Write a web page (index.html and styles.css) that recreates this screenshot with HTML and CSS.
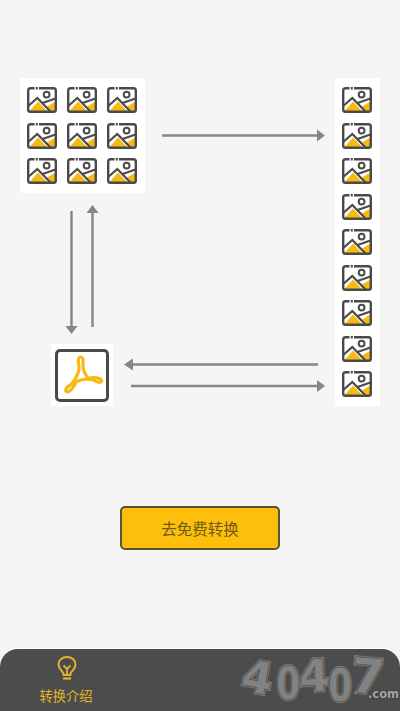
FILE: index.html
```html
<!DOCTYPE html>
<html lang="zh">
<head>
<meta charset="utf-8">
<title>转换介绍</title>
<link rel="stylesheet" href="styles.css">
</head>
<body>
<svg class="defs" width="0" height="0" aria-hidden="true">
  <symbol id="pic" viewBox="0 0 30 26">
    <path d="M2 24.500 L11 14.500 L20.500 24.500 Z M20 19.500 L28.500 14.500 V24.500 H25 Z" fill="#f5bb14"/>
    <path d="M7.500 1.200 H3.500 Q1.200 1.200 1.200 3.500 V22.500 Q1.200 24.800 3.500 24.800 H26.500 Q28.800 24.800 28.800 22.500 V3.500 Q28.800 1.200 26.500 1.200 H12 M8.800 1.200 H10.800" fill="none" stroke="#4a4a4a" stroke-width="2.400"/>
    <path d="M1.500 18.800 L10.300 11 L24 25" fill="none" stroke="#4a4a4a" stroke-width="2.200"/>
    <path d="M15.500 16 L28.500 11.500" fill="none" stroke="#4a4a4a" stroke-width="2.200"/>
    <circle cx="19.600" cy="7.600" r="2.900" fill="none" stroke="#4a4a4a" stroke-width="2"/>
  </symbol>
</svg>

<main class="screen">
  <section class="diagram">
    <div class="panel panel-grid">
      <svg class="pic"><use href="#pic"/></svg><svg class="pic"><use href="#pic"/></svg><svg class="pic"><use href="#pic"/></svg>
      <svg class="pic"><use href="#pic"/></svg><svg class="pic"><use href="#pic"/></svg><svg class="pic"><use href="#pic"/></svg>
      <svg class="pic"><use href="#pic"/></svg><svg class="pic"><use href="#pic"/></svg><svg class="pic"><use href="#pic"/></svg>
    </div>
    <div class="panel panel-column">
      <svg class="pic"><use href="#pic"/></svg><svg class="pic"><use href="#pic"/></svg><svg class="pic"><use href="#pic"/></svg>
      <svg class="pic"><use href="#pic"/></svg><svg class="pic"><use href="#pic"/></svg><svg class="pic"><use href="#pic"/></svg>
      <svg class="pic"><use href="#pic"/></svg><svg class="pic"><use href="#pic"/></svg><svg class="pic"><use href="#pic"/></svg>
    </div>
    <div class="panel panel-pdf">
      <div class="pdf-box">
        <svg class="pdf-logo" viewBox="0 0 54 53">
          <path d="M25.500 8 C23 8 23 13 24 18 C24.500 23 20.500 30.500 16 35.500 C10.500 38.500 9.500 42.500 12 43 C15 43 19 37.500 21.500 32.500 C26 30.500 33 29.500 38 31 C43 34 47.500 34 46.500 31.500 C45.500 28.500 38 28 33.500 29.500 C29.500 25 27.500 20 28 14 C28.500 10 28 8 25.500 8 Z" fill="none" stroke="#f5bb14" stroke-width="3.200" stroke-linejoin="round"/>
        </svg>
      </div>
    </div>
    <svg class="arrows" viewBox="0 0 400 480" aria-hidden="true">
      <g stroke="#868686" stroke-width="2.400" fill="#868686">
        <path d="M162 135.500 H319"/><path d="M317 129.500 L325 135.500 L317 141.500 Z" stroke="none"/>
        <path d="M71.500 211 V327"/><path d="M65.500 326 L71.500 334 L77.500 326 Z" stroke="none"/>
        <path d="M92.500 327 V210"/><path d="M86.500 213 L92.500 205 L98.500 213 Z" stroke="none"/>
        <path d="M318 364.500 H130"/><path d="M133 358.500 L124 364.500 L133 370.500 Z" stroke="none"/>
        <path d="M131 386 H320"/><path d="M317 380 L325 386 L317 392 Z" stroke="none"/>
      </g>
    </svg>
  </section>

  <div class="action">
    <button class="convert-btn" type="button">去免费转换</button>
  </div>

  <nav class="tabbar">
    <a class="tab">
      <svg class="bulb" viewBox="0 0 22 25">
        <path d="M7.500 19 V17.500 C6 14.500 2.500 13 2.500 8.500 C2.500 4 6.500 1 11 1 C15.500 1 19.500 4 19.500 8.500 C19.500 13 16 14.500 14.500 17.500 V19 Z" fill="none" stroke="#e0b52a" stroke-width="2" stroke-linejoin="round"/>
        <path d="M7.500 9.500 L11 13 L14.500 9.500 M11 13 V18.500" fill="none" stroke="#e0b52a" stroke-width="1.800"/>
        <path d="M7 22.500 H15" stroke="#e0b52a" stroke-width="2.200"/>
      </svg>
      <span class="tab-label">转换介绍</span>
    </a>
    <div class="watermark">
      <span class="wm wm-a">4</span><span class="wm wm-b">0</span><span class="wm wm-c">4</span><span class="wm wm-d">0</span><span class="wm wm-e">7</span><span class="wm-com">.com</span>
    </div>
  </nav>
</main>
</body>
</html>
```

FILE: styles.css
```css
* { box-sizing: border-box; }

html, body {
  margin: 0;
  padding: 0;
  height: 100%;
}

body {
  background: #f5f5f5;
  font-family: "Noto Sans CJK SC", "Noto Sans", sans-serif;
  overflow: hidden;
}

.defs { position: absolute; }

.screen {
  display: flex;
  flex-direction: column;
  height: 711px;
  width: 400px;
}

.diagram {
  position: relative;
  height: 480px;
  flex: none;
}

.panel {
  position: absolute;
  background: #fff;
}

.panel-grid {
  left: 20px;
  top: 78px;
  width: 125px;
  height: 115px;
  padding: 9px 8px 0 7px;
  display: grid;
  grid-template-columns: repeat(3, 30px);
  column-gap: 10px;
  row-gap: 9.500px;
  align-content: start;
}

.panel-column {
  left: 335px;
  top: 78px;
  width: 45px;
  height: 328px;
  padding: 9px 0 0 7px;
  display: flex;
  flex-direction: column;
  gap: 9.500px;
}

.pic {
  display: block;
  width: 30px;
  height: 26px;
  flex: none;
}

.panel-pdf {
  left: 51px;
  top: 344px;
  width: 62px;
  height: 62px;
  padding: 5px 4px 4px;
}

.pdf-box {
  width: 54px;
  height: 53px;
  border: 3px solid #4a4a4a;
  border-radius: 5px;
}

.pdf-logo {
  display: block;
  width: 54px;
  height: 53px;
  margin: -3px;
}

.arrows {
  position: absolute;
  left: 0;
  top: 0;
  width: 400px;
  height: 480px;
  pointer-events: none;
}

.action {
  display: flex;
  justify-content: center;
  padding-top: 26px;
  flex: none;
}

.convert-btn {
  width: 160px;
  height: 44px;
  padding: 0;
  background: #fdbf0b;
  border: 2px solid #58523e;
  border-radius: 5px;
  color: #6f5818;
  font-family: inherit;
  font-size: 15.500px;
}

.tabbar {
  position: relative;
  margin-top: auto;
  height: 62px;
  flex: none;
  background: #4c4c4c;
  border-radius: 18px 18px 0 0;
  box-shadow: 0 -1px 0 #ffffff;
  padding-left: 40px;
}

.tab {
  display: flex;
  flex-direction: column;
  align-items: center;
  width: 54px;
  padding-top: 7px;
}

.bulb {
  display: block;
  width: 22px;
  height: 25px;
}

.tab-label {
  color: #e0b52a;
  font-size: 13.250px;
  line-height: 18px;
  margin: 6px 2px 0 0;
  white-space: nowrap;
}

.watermark {
  position: absolute;
  left: 240px;
  top: 8px;
  width: 160px;
  height: 54px;
  font-family: "DejaVu Sans", sans-serif;
  font-weight: 700;
  color: #828282;
}

.wm {
  position: absolute;
  font-size: 44px;
  line-height: 44px;
  -webkit-text-stroke: 3.500px #828282;
  paint-order: stroke fill;
  text-shadow: 0 0 2px #363636, 0 0 2px #363636;
}

.wm-a { left: 2px; top: -1px; transform: rotate(10deg); }
.wm-b { left: 33px; top: 5px; transform: scaleX(.78); }
.wm-c { left: 59px; top: -3px; transform: rotate(-2deg); }
.wm-d { left: 85px; top: 7px; transform: scaleX(.78); }
.wm-e { left: 111px; top: -5px; transform: rotate(5deg); font-size: 48px; line-height: 48px; }

.wm-com {
  position: absolute;
  left: 128px;
  top: 30px;
  font-size: 11.500px;
  line-height: 14px;
  color: #a2a2a2;
  text-shadow: 0 0 2px #363636;
}
```
